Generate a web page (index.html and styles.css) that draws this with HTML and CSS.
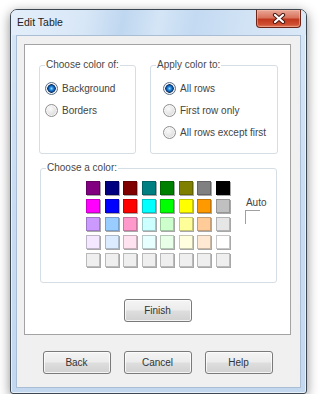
FILE: index.html
```html
<!DOCTYPE html>
<html lang="en">
<head>
<meta charset="utf-8">
<title>Edit Table</title>
<link rel="stylesheet" href="styles.css">
</head>
<body>
<div class="window">
  <div class="titlebar">
    <span class="title">Edit Table</span>
    <button class="close" aria-label="Close">
      <svg width="14" height="11" viewBox="0 0 14 11"><path d="M3 2 L11 9 M11 2 L3 9" stroke="#4a1a12" stroke-width="4.2" stroke-linecap="round"/><path d="M3 2 L11 9 M11 2 L3 9" stroke="#fff" stroke-width="2.2" stroke-linecap="round"/></svg>
    </button>
  </div>
  <div class="client">
    <div class="panel">
      <div class="top-row">
        <fieldset class="group group-of">
          <legend>Choose color of:</legend>
          <div class="radios">
            <label class="radio"><input type="radio" name="of" checked><span>Background</span></label>
            <label class="radio"><input type="radio" name="of"><span>Borders</span></label>
          </div>
        </fieldset>
        <fieldset class="group group-to">
          <legend>Apply color to:</legend>
          <div class="radios radios-indent">
            <label class="radio"><input type="radio" name="to" checked><span>All rows</span></label>
            <label class="radio"><input type="radio" name="to"><span>First row only</span></label>
            <label class="radio"><input type="radio" name="to"><span>All rows except first</span></label>
          </div>
        </fieldset>
      </div>
      <fieldset class="group group-color">
        <legend>Choose a color:</legend>
        <div class="color-area">
          <div class="swatches">
            <span class="sw" style="background:#800080"></span>
            <span class="sw" style="background:#000080"></span>
            <span class="sw" style="background:#800000"></span>
            <span class="sw" style="background:#008080"></span>
            <span class="sw" style="background:#008000"></span>
            <span class="sw" style="background:#808000"></span>
            <span class="sw" style="background:#808080"></span>
            <span class="sw" style="background:#000000"></span>
            <span class="sw" style="background:#ff00ff"></span>
            <span class="sw" style="background:#0000ff"></span>
            <span class="sw" style="background:#ff0000"></span>
            <span class="sw" style="background:#00ffff"></span>
            <span class="sw" style="background:#00ff00"></span>
            <span class="sw" style="background:#ffff00"></span>
            <span class="sw" style="background:#ff9900"></span>
            <span class="sw" style="background:#c0c0c0"></span>
            <span class="sw" style="background:#cc99ff"></span>
            <span class="sw" style="background:#99ccff"></span>
            <span class="sw" style="background:#ff99cc"></span>
            <span class="sw" style="background:#ccffff"></span>
            <span class="sw" style="background:#ccffcc"></span>
            <span class="sw" style="background:#ffff99"></span>
            <span class="sw" style="background:#ffcc99"></span>
            <span class="sw" style="background:#e6e6e6"></span>
            <span class="sw" style="background:#f3e8ff"></span>
            <span class="sw" style="background:#dcebff"></span>
            <span class="sw" style="background:#ffe2ef"></span>
            <span class="sw" style="background:#e8ffff"></span>
            <span class="sw" style="background:#e8ffe8"></span>
            <span class="sw" style="background:#ffffe0"></span>
            <span class="sw" style="background:#ffe9d2"></span>
            <span class="sw" style="background:#ffffff"></span>
            <span class="sw" style="background:#efefef"></span>
            <span class="sw" style="background:#efefef"></span>
            <span class="sw" style="background:#efefef"></span>
            <span class="sw" style="background:#efefef"></span>
            <span class="sw" style="background:#efefef"></span>
            <span class="sw" style="background:#efefef"></span>
            <span class="sw" style="background:#efefef"></span>
            <span class="sw" style="background:#efefef"></span>
          </div>
          <div class="auto">
            <span class="auto-label">Auto</span>
            <span class="auto-box"></span>
          </div>
        </div>
      </fieldset>
      <div class="finish-row"><button class="btn">Finish</button></div>
    </div>
    <div class="buttons">
      <button class="btn">Back</button>
      <button class="btn">Cancel</button>
      <button class="btn">Help</button>
    </div>
  </div>
</div>
</body>
</html>
```

FILE: styles.css
```css
* { box-sizing: border-box; }
html, body { margin: 0; background: #fff; }
body {
  font-family: "Liberation Sans", Arial, sans-serif;
  font-size: 10px;
  color: #444;
}

.window {
  margin: 9px 0 0 10px;
  width: 297px;
  height: 385px;
  border: 1px solid #3d4752;
  border-radius: 7px 7px 3px 3px;
  background: linear-gradient(180deg, #d9e7f6 0%, #c9dcf1 50%, #c3d8ef 100%);
  box-shadow: 0 3px 12px rgba(0, 0, 0, 0.45), inset 0 0 0 1px rgba(255, 255, 255, 0.6);
  display: flex;
  flex-direction: column;
}

.titlebar {
  height: 25px;
  display: flex;
  align-items: flex-start;
  border-radius: 6px 6px 0 0;
  background: linear-gradient(100deg, #e4eefa 0%, #d8e7f7 25%, #bfd7f0 38%, #d4e5f6 50%, #c3daf2 62%, #d2e3f5 80%, #dae8f7 100%);
}
.title {
  line-height: 25px;
  padding-left: 6px;
  font-size: 10.5px;
  color: #222;
}
.close {
  margin: 0 5px 0 auto;
  width: 45px;
  height: 18px;
  padding: 0;
  border: 1px solid #6b2418;
  border-top: none;
  border-radius: 0 0 4px 4px;
  background: linear-gradient(180deg, #e9a797 0%, #d9735d 45%, #c0391f 55%, #cf4f33 85%, #e27b5f 100%);
  box-shadow: inset 0 0 0 1px rgba(255, 200, 180, 0.45);
  display: flex;
  align-items: center;
  justify-content: center;
}
.close svg { display: block; }

.client {
  flex: 1;
  margin: 0 5px 5px 5px;
  border: 1px solid #a9bdd4;
  background: #f0f0f0;
  padding: 8px 9px 0 7px;
}

.panel {
  height: 291px;
  border: 1px solid #a3a3a3;
  background: #fff;
  padding: 14px 0 0 14px;
}

.top-row {
  display: flex;
  gap: 14px;
}

.group {
  margin: 0;
  padding: 0 5px;
  min-width: 0;
  border: 1px solid #d5dee4;
  border-radius: 3px;
}
.group legend {
  padding: 0 1px;
  line-height: 12px;
  color: #484848;
}
.group-of { width: 97px; height: 95px; }
.group-to { width: 128px; height: 95px; }

.radios { padding-top: 6px; }
.radios-indent { padding-left: 7px; }
.radio {
  display: flex;
  align-items: center;
  height: 22px;
  gap: 4px;
  color: #444;
}
.radio input {
  appearance: none;
  -webkit-appearance: none;
  margin: 0;
  width: 13px;
  height: 13px;
  border-radius: 50%;
  border: 1px solid #8f8f8f;
  background: radial-gradient(circle at 40% 35%, #fafafa 0, #e8e8e8 45%, #cfcfcf 100%);
  box-shadow: inset 0 0 0 1px rgba(255, 255, 255, 0.7);
}
.radio input:checked {
  border-color: #5b6f86;
  background:
    radial-gradient(circle at 50% 50%, #9fdcff 0, #2a8fe0 1.6px, #0c57a8 3px, #0f2f5c 4px, rgba(15, 47, 92, 0) 4.6px),
    radial-gradient(circle at 40% 35%, #fafafa 0, #e8e8e8 45%, #cfcfcf 100%);
}

.group-color {
  margin: 8px 0 0 1px;
  width: 237px;
  height: 121px;
}
.color-area {
  display: flex;
  padding: 7px 0 0 40px;
}
.swatches {
  display: grid;
  grid-template-columns: repeat(8, 14px);
  grid-auto-rows: 14px;
  column-gap: 4.57px;
  row-gap: 4px;
}
.sw {
  display: block;
  width: 14px;
  height: 14px;
  border: 1px solid rgba(0, 0, 0, 0.22);
  box-shadow: 1px 1px 0 #a8a8a8;
}

.auto {
  display: flex;
  flex-direction: column;
  margin-left: 15px;
  padding-top: 16px;
}
.auto-label {
  line-height: 12px;
  color: #444;
  padding-left: 1px;
}
.auto-box {
  display: block;
  margin-top: 1px;
  width: 15px;
  height: 14px;
  border-top: 1px solid #a0a0a0;
  border-left: 1px solid #a0a0a0;
}

.finish-row {
  display: flex;
  justify-content: center;
  margin-top: 16px;
  padding-right: 14px;
}

.btn {
  width: 68px;
  height: 23px;
  padding: 0;
  font-family: "Liberation Sans", Arial, sans-serif;
  font-size: 10px;
  color: #333;
  border: 1px solid #7a7a7a;
  border-radius: 3px;
  background: linear-gradient(180deg, #f4f4f4 0%, #ececec 48%, #dedede 52%, #d1d1d1 100%);
  box-shadow: inset 0 0 0 1px rgba(255, 255, 255, 0.75);
}

.buttons {
  display: flex;
  justify-content: center;
  gap: 13px;
  margin-top: 16px;
}
```
